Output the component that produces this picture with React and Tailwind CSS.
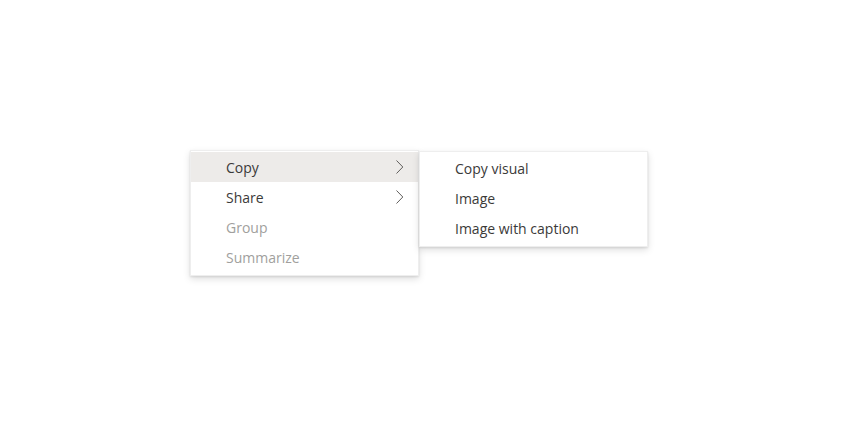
import React from 'react';

const mainItems = [
  { label: 'Copy', submenu: true, active: true },
  { label: 'Share', submenu: true },
  { label: 'Group', disabled: true },
  { label: 'Summarize', disabled: true },
];

const copyItems = ['Copy visual', 'Image', 'Image with caption'];

function Chevron() {
  return (
    <svg width="9" height="16" viewBox="0 0 9 16" fill="none" className="shrink-0">
      <path d="M1.5 1.5 L7.8 8 L1.5 14.5" stroke="#605e5c" strokeWidth="1" />
    </svg>
  );
}

export default function App() {
  return (
    <div
      className="w-[860px] h-[430px] bg-white pt-[150px] pl-[190px] flex items-start"
      style={{ fontFamily: '"Open Sans", "Noto Sans", sans-serif' }}
    >
      {/* Main menu */}
      <div className="w-[229px] bg-white pt-[1px] pb-[3px] border border-[#eeeeee] shadow-[0_3px_7px_rgba(0,0,0,0.13),0_1px_2px_rgba(0,0,0,0.1)] relative z-10">
        {mainItems.map((item) => (
          <div
            key={item.label}
            className={`h-[30px] flex items-center pl-[35px] pr-[14px] text-[14px] ${
              item.active ? 'bg-[#edebe9]' : ''
            } ${item.disabled ? 'text-[#a19f9d]' : 'text-[#3b3a39]'}`}
          >
            <span className="flex-1">{item.label}</span>
            {item.submenu && <Chevron />}
          </div>
        ))}
      </div>

      {/* Submenu */}
      <div className="w-[229px] mt-[1px] bg-white pt-[1px] pb-[3px] border border-[#eeeeee] shadow-[0_3px_7px_rgba(0,0,0,0.13),0_1px_2px_rgba(0,0,0,0.1)] relative z-20">
        {copyItems.map((label) => (
          <div
            key={label}
            className="h-[30px] flex items-center pl-[35px] text-[14px] text-[#3b3a39]"
          >
            {label}
          </div>
        ))}
      </div>
    </div>
  );
}
